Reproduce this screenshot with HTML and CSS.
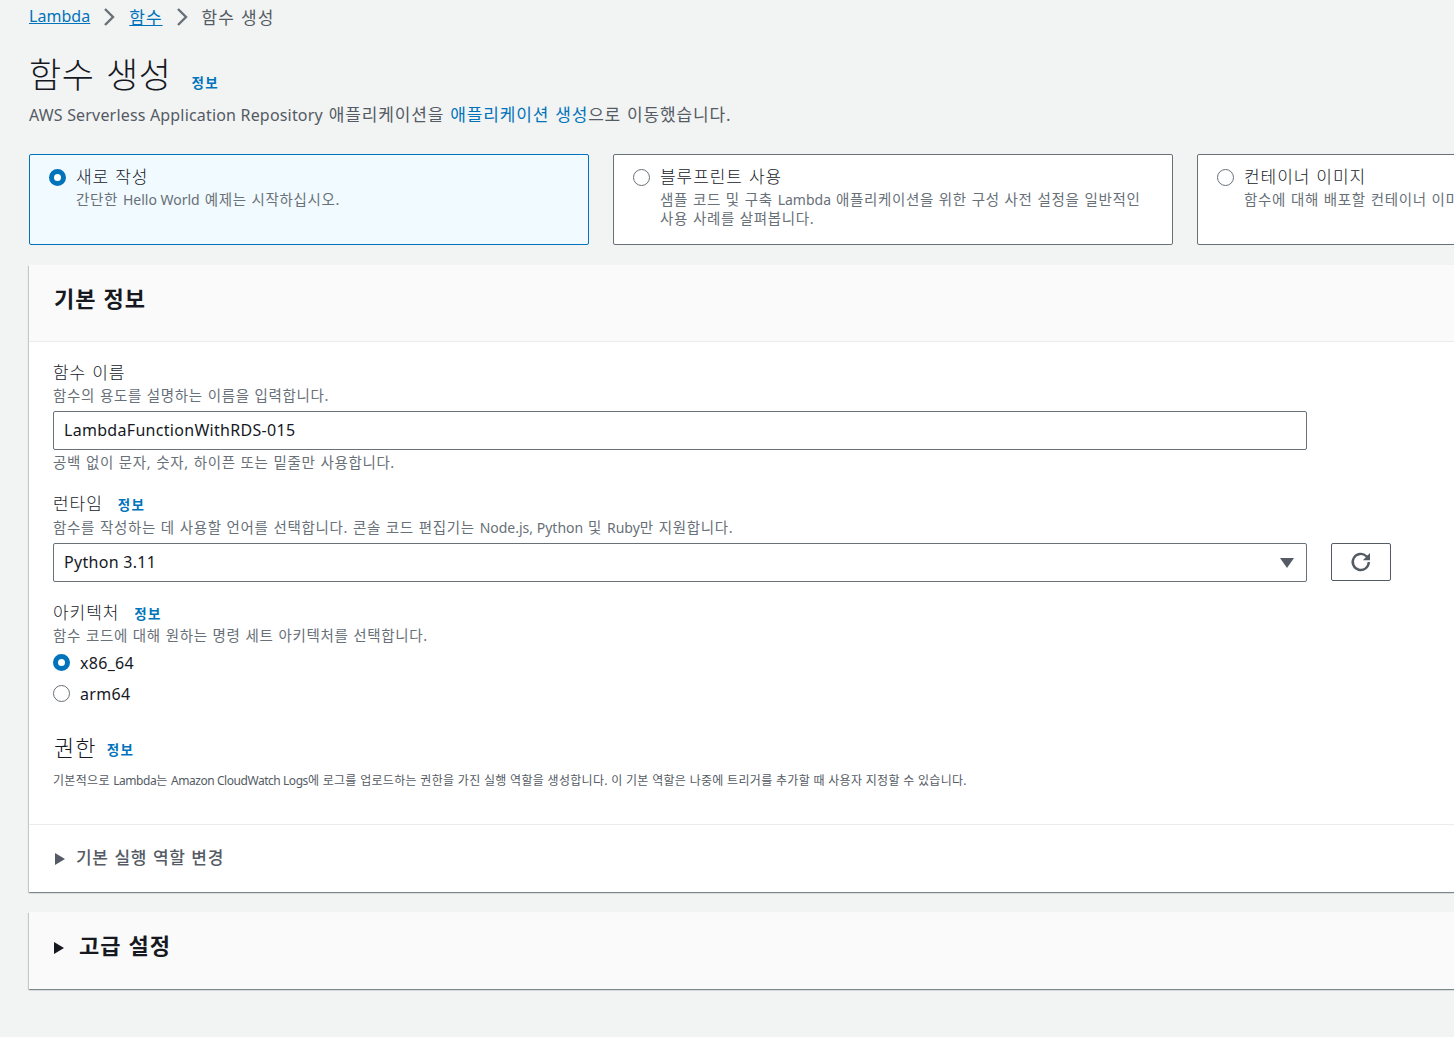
FILE: index.html
```html
<!DOCTYPE html>
<html lang="ko">
<head>
<meta charset="utf-8">
<title>함수 생성</title>
<link rel="stylesheet" href="styles.css">
</head>
<body>
<main class="page">
  <nav class="crumbs">
    <a class="en" href="#">Lambda</a>
    <svg class="crumb-sep" viewBox="0 0 12 20"><path d="M2 2l8 8-8 8"/></svg>
    <a href="#">함수</a>
    <svg class="crumb-sep" viewBox="0 0 12 20"><path d="M2 2l8 8-8 8"/></svg>
    <span>함수 생성</span>
  </nav>
  <header class="title-row">
    <h1>함수 생성</h1>
    <a class="info info-title" href="#">정보</a>
  </header>
  <p class="lead"><span class="en">AWS Serverless Application Repository</span> 애플리케이션을 <a href="#">애플리케이션 생성</a>으로 이동했습니다.</p>

  <section class="tiles">
    <div class="tile tile-on">
      <span class="radio radio-on"></span>
      <div>
        <div class="tile-name">새로 작성</div>
        <div class="tile-desc">간단한 <span class="en-14">Hello World</span> 예제는 시작하십시오.</div>
      </div>
    </div>
    <div class="tile">
      <span class="radio"></span>
      <div>
        <div class="tile-name">블루프린트 사용</div>
        <div class="tile-desc">샘플 코드 및 구축 <span class="en-14">Lambda</span> 애플리케이션을 위한 구성 사전 설정을 일반적인 사용 사례를 살펴봅니다.</div>
      </div>
    </div>
    <div class="tile">
      <span class="radio"></span>
      <div>
        <div class="tile-name">컨테이너 이미지</div>
        <div class="tile-desc tile-desc-nowrap">함수에 대해 배포할 컨테이너 이미지를 선택합니다.</div>
      </div>
    </div>
  </section>

  <section class="panel">
    <h2 class="panel-head">기본 정보</h2>
    <div class="panel-body">
      <div class="field">
        <div class="label">함수 이름</div>
        <div class="hint">함수의 용도를 설명하는 이름을 입력합니다.</div>
        <div class="control">LambdaFunctionWithRDS-015</div>
        <div class="hint hint-after">공백 없이 문자, 숫자, 하이픈 또는 밑줄만 사용합니다.</div>
      </div>
      <div class="field field-runtime">
        <div class="label">런타임<a class="info" href="#">정보</a></div>
        <div class="hint">함수를 작성하는 데 사용할 언어를 선택합니다. 콘솔 코드 편집기는 <span class="en-14">Node.js, Python</span> 및 <span class="en-14">Ruby</span>만 지원합니다.</div>
        <div class="select-row">
          <div class="control control-select">Python 3.11<span class="caret"></span></div>
          <button class="refresh" type="button" aria-label="새로 고침">
            <svg viewBox="0 0 20 20"><path d="M16.5 10a6.7 6.7 0 1 1-2-4.8L16.500 7"/><path class="fill" d="M17.500 2.500v6h-6z"/></svg>
          </button>
        </div>
      </div>
      <div class="field field-arch">
        <div class="label">아키텍처<a class="info" href="#">정보</a></div>
        <div class="hint hint-arch">함수 코드에 대해 원하는 명령 세트 아키텍처를 선택합니다.</div>
        <div class="option option-first"><span class="radio radio-on"></span>x86_64</div>
        <div class="option"><span class="radio"></span>arm64</div>
      </div>
      <div class="perm">
        <div class="perm-title"><h3>권한</h3><a class="info" href="#">정보</a></div>
        <p class="perm-desc">기본적으로 <span class="en-small">Lambda</span>는 <span class="en-small">Amazon CloudWatch Logs</span>에 로그를 업로드하는 권한을 가진 실행 역할을 생성합니다. 이 기본 역할은 나중에 트리거를 추가할 때 사용자 지정할 수 있습니다.</p>
      </div>
    </div>
    <div class="expander"><span class="tri tri-grey"></span>기본 실행 역할 변경</div>
  </section>

  <section class="panel panel-adv">
    <h2 class="adv-head"><span class="tri tri-adv"></span>고급 설정</h2>
  </section>
</main>
</body>
</html>
```
FILE: styles.css
```css
html, body { margin: 0; padding: 0; height: 100%; overflow: hidden; }
body {
  background: #f2f3f3;
  color: #16191f;
  font-family: "Noto Sans", "Noto Sans CJK KR", sans-serif;
  font-size: 16px;
}
a { color: #0073bb; text-decoration: none; }
.page { width: 1728px; padding: 0 0 0 29px; }
.en { font-size: 16px; letter-spacing: .18px; word-spacing: 0; }
.en-14 { font-size: 14px; letter-spacing: 0; word-spacing: 0; }
.en-small { letter-spacing: -.45px; }

.crumbs { display: flex; align-items: center; height: 32px; font-size: 17px; color: #545b64; letter-spacing: .06em; word-spacing: .7px; }
.crumbs a { text-decoration: underline; }
.crumbs .en { letter-spacing: .05px; }
.crumb-sep { width: 12px; height: 20px; margin: 2px 14px 0 13px; fill: none; stroke: #687078; stroke-width: 2.4; }

.title-row { display: flex; align-items: flex-end; margin-top: 21px; height: 44px; }
h1 { margin: 0; font-size: 35px; font-weight: 300; line-height: 44px; letter-spacing: .015em; word-spacing: 2px; }
.info { font-size: 13.5px; font-weight: 700; margin-left: 15px; letter-spacing: .1em; }
.info-title { margin-left: 20px; margin-bottom: 5px; }
.lead { margin: 6px 0 0; font-size: 17px; line-height: 24px; color: #545b64; letter-spacing: .05em; word-spacing: .7px; }

.tiles { display: flex; gap: 24px; margin-top: 27px; }
.tile {
  display: flex; gap: 10px; width: 560px; height: 91px; box-sizing: border-box;
  padding: 10px 19px; background: #fff; border: 1px solid #687078; border-radius: 2px;
}
.tile-on { background: #f1faff; border-color: #0073bb; }
.tile-name { padding-top: 1px; font-size: 17px; font-weight: 300; line-height: 22px; letter-spacing: .055em; word-spacing: .7px; }
.tile-desc { font-size: 14.5px; line-height: 19px; color: #687078; margin-top: 2px; letter-spacing: .045em; word-spacing: .5px; }
.tile-desc-nowrap { white-space: nowrap; }

.radio {
  flex: none; display: block; width: 17px; height: 17px; box-sizing: border-box;
  margin-top: 4px; background: #fff; border: 1.500px solid #687078; border-radius: 50%;
}
.radio-on { border: 5px solid #0073bb; }

.panel {
  margin-top: 20px; background: #fff; box-shadow: 0 1px 1px 0 rgba(0,28,36,.3), 1px 1px 1px 0 rgba(0,28,36,.15), -1px 1px 1px 0 rgba(0,28,36,.15);
}
.panel-head {
  margin: 0; height: 77px; box-sizing: border-box; padding: 19px 25px 0;
  font-size: 22px; font-weight: 700; line-height: 28px; letter-spacing: .05em;
  background: #fafafa; border-bottom: 1px solid #eaeded;
}
.panel-body { padding: 19px 24px 0; height: 482px; box-sizing: border-box; }

.label { margin-bottom: 1px; font-size: 17px; font-weight: 300; line-height: 24px; display: flex; align-items: center; letter-spacing: .055em; word-spacing: .7px; }
.label .info { margin-top: 2px; }
.hint { font-size: 14.5px; line-height: 19px; color: #687078; letter-spacing: .045em; word-spacing: .5px; }
.hint-after { margin-top: 3px; }
.hint-arch { margin-top: -1px; }
.control {
  width: 1254px; height: 39px; box-sizing: border-box; margin-top: 6px;
  padding: 0 10px; line-height: 37px; font-size: 16px; letter-spacing: .3px;
  background: #fff; border: 1px solid #687078; border-radius: 2px;
}
.field-runtime { margin-top: 19px; }
.field-arch { margin-top: 18px; }
.select-row { display: flex; gap: 24px; }
.control-select { position: relative; }
.caret {
  position: absolute; right: 12px; top: 14px; width: 0; height: 0;
  border-left: 7px solid transparent; border-right: 7px solid transparent; border-top: 10px solid #545b64;
}
.refresh {
  display: flex; align-items: center; justify-content: center; width: 60px; height: 38px; margin-top: 6px; padding: 0;
  background: #fff; border: 1px solid #545b64; border-radius: 2px;
}
.refresh svg { width: 24px; height: 24px; fill: none; stroke: #545b64; stroke-width: 2; }
.refresh .fill { fill: #545b64; stroke: none; }

.option { display: flex; align-items: center; gap: 10px; height: 31px; font-size: 16px; letter-spacing: .3px; }
.option-first { margin-top: 2px; }
.option .radio { margin-top: 0; }

.perm { margin-top: 23px; }
.perm-title { display: flex; align-items: center; padding-left: 1px; }
h3 { margin: 0; font-size: 22px; font-weight: 300; line-height: 30px; letter-spacing: .05em; }
.perm-title .info { margin-left: 10px; margin-top: 3px; }
.perm-desc { margin: 10px 0 0; font-size: 12px; line-height: 18px; color: #545b64; letter-spacing: .31px; }

.expander {
  display: flex; align-items: center; height: 68px; box-sizing: border-box; padding: 0 24px 4px 26px;
  border-top: 1px solid #eaeded; font-size: 17px; font-weight: 500; color: #545b64; letter-spacing: .04em; word-spacing: .7px;
}
.tri {
  width: 0; height: 0; margin-right: 14px;
  border-top: 6px solid transparent; border-bottom: 6px solid transparent; border-left: 10px solid #16191f;
}
.tri-grey { border-left-color: #545b64; margin-right: 11px; margin-top: 4px; }
.tri-adv { margin-top: 8px; margin-right: 15px; }

.panel-adv { background: #fafafa; }
.adv-head {
  display: flex; align-items: center; margin: 0; height: 77px; padding: 0 24px 13px 25px; box-sizing: border-box;
  font-size: 22px; font-weight: 700; letter-spacing: .05em;
}
```
